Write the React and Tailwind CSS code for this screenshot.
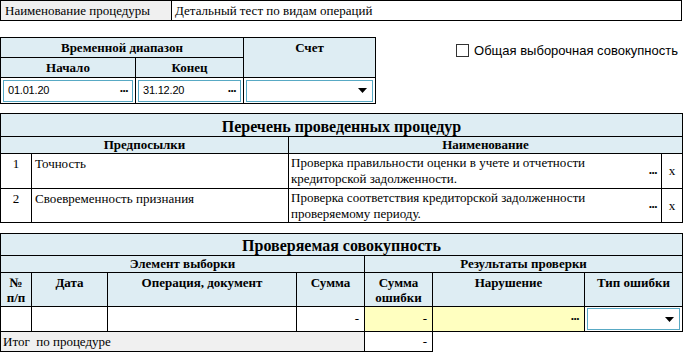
const serif = "font-[family-name:Liberation_Serif,Times_New_Roman,serif]";
const sans = "font-[family-name:Liberation_Sans,Arial,sans-serif]";

// grid tables: black background shows through 1px gaps as cell borders
const grid = "grid gap-px bg-black border border-black";
const head = "bg-[#deedf3] font-bold text-center leading-[15px]";
const cell = "bg-white";

function Dots() {
  return <span className="font-bold text-[13px] leading-none tracking-[-0.5px]">...</span>;
}

function Caret() {
  return (
    <svg width="9" height="5" viewBox="0 0 9 5">
      <path d="M0 0h9L4.5 5z" fill="#000" />
    </svg>
  );
}

function DateInput({ value }) {
  return (
    <div className={`${cell} flex items-center px-[2px]`}>
      <div className="w-full h-[22px] border border-[#58a9c4] flex items-center justify-between pl-[4px] pr-[4px]">
        <span className={`${sans} text-[11px] tracking-[-0.2px]`}>{value}</span>
        <span className="-mt-[6px]"><Dots /></span>
      </div>
    </div>
  );
}

function SelectBox() {
  return (
    <div className={`${cell} flex items-center px-[2px]`}>
      <div className="w-full h-[22px] border border-[#58a9c4] flex items-center justify-end pr-[5px]">
        <Caret />
      </div>
    </div>
  );
}

const procedures = [
  {
    n: 1,
    pre: "Точность",
    name: ["Проверка правильности оценки в учете и отчетности", "кредиторской задолженности."],
  },
  {
    n: 2,
    pre: "Своевременность признания",
    name: ["Проверка соответствия кредиторской задолженности", "проверяемому периоду."],
  },
];

export default function App() {
  return (
    <div className={`${serif} w-[683px] h-[353px] bg-white text-[13px] text-black overflow-hidden`}>
      {/* Procedure name */}
      <div className={`${grid} w-[682px] grid-cols-[170px_1fr] grid-rows-[19px]`}>
        <div className="bg-[#f0f0f0] pl-[4px] flex items-center">Наименование процедуры</div>
        <div className={`${cell} pl-[3px] flex items-center`}>Детальный тест по видам операций</div>
      </div>

      {/* Range + account */}
      <div className="flex mt-[16px]">
        <div className={`${grid} w-[376px] shrink-0 grid-cols-[134px_107px_131px] grid-rows-[19px_19px_25px]`}>
          <div className={`${head} col-span-2 pt-[2px]`}>Временной диапазон</div>
          <div className={`${head} row-span-2 pt-[2px]`}>Счет</div>
          <div className={`${head} pt-[2px]`}>Начало</div>
          <div className={`${head} pt-[2px]`}>Конец</div>
          <DateInput value="01.01.20" />
          <DateInput value="31.12.20" />
          <SelectBox />
        </div>
        <label className={`${sans} ml-auto mr-[5px] mt-[4px] h-fit flex items-center gap-[5px] text-[13px] whitespace-nowrap`}>
          <span className="w-[13px] h-[13px] border border-[#333] bg-white shrink-0" />
          Общая выборочная совокупность
        </label>
      </div>

      {/* Procedures list */}
      <div className={`${grid} w-[683px] mt-[9px] grid-cols-[30px_256px_372px_20px] grid-rows-[22px_16px_34px_33px]`}>
        <div className={`${head} col-span-4 text-[16px] flex items-center justify-center pt-[2px]`}>Перечень проведенных процедур</div>
        <div className={`${head} col-span-2`}>Предпосылки</div>
        <div className={`${head} col-span-2`}>Наименование</div>
        {procedures.map((p) => [
          <div key={`n${p.n}`} className={`${cell} text-center pt-[2px] leading-[16px]`}>{p.n}</div>,
          <div key={`p${p.n}`} className={`${cell} pl-[3px] pt-[2px] leading-[16px]`}>{p.pre}</div>,
          <div key={`d${p.n}`} className={`${cell} pl-[2px] pt-[1px] pr-[4px] leading-[16px] flex justify-between`}>
            <div className="whitespace-nowrap">
              {p.name.map((l) => (
                <div key={l}>{l}</div>
              ))}
            </div>
            <span className="self-center -mt-[4px]"><Dots /></span>
          </div>,
          <div key={`x${p.n}`} className={`${cell} flex items-center justify-center`}>x</div>,
        ])}
      </div>

      {/* Sample population */}
      <div className={`${grid} w-[683px] mt-[10px] grid-cols-[30px_75px_188px_67px_67px_151px_97px] grid-rows-[21px_16px_33px_24px] border-b-0`}>
        <div className={`${head} col-span-7 text-[16px] flex items-center justify-center pt-[1px]`}>Проверяемая совокупность</div>
        <div className={`${head} col-span-4`}>Элемент выборки</div>
        <div className={`${head} col-span-3`}>Результаты проверки</div>
        <div className={`${head} pt-[2px]`}>№<br />п/п</div>
        <div className={`${head} pt-[2px]`}>Дата</div>
        <div className={`${head} pt-[2px]`}>Операция, документ</div>
        <div className={`${head} pt-[2px]`}>Сумма</div>
        <div className={`${head} pt-[2px]`}>Сумма<br />ошибки</div>
        <div className={`${head} pt-[2px]`}>Нарушение</div>
        <div className={`${head} pt-[2px]`}>Тип ошибки</div>
        <div className={cell} />
        <div className={cell} />
        <div className={cell} />
        <div className={`${cell} flex items-center justify-end pr-[5px]`}>-</div>
        <div className="bg-[#ffffc0] flex items-center justify-end pr-[5px]">-</div>
        <div className="bg-[#ffffc0] flex items-center justify-end pr-[5px]"><span className="-mt-[6px]"><Dots /></span></div>
        <SelectBox />
      </div>
      {/* Totals */}
      <div className="flex border-t border-black w-[683px]">
        <div className="w-[364px] h-[20px] border-l border-b border-black bg-[#f0f0f0] pl-[2px] flex items-center">Итог&nbsp; по процедуре</div>
        <div className="w-[69px] h-[20px] border-x border-b border-black flex items-center justify-end pr-[5px]">-</div>
      </div>
    </div>
  );
}
